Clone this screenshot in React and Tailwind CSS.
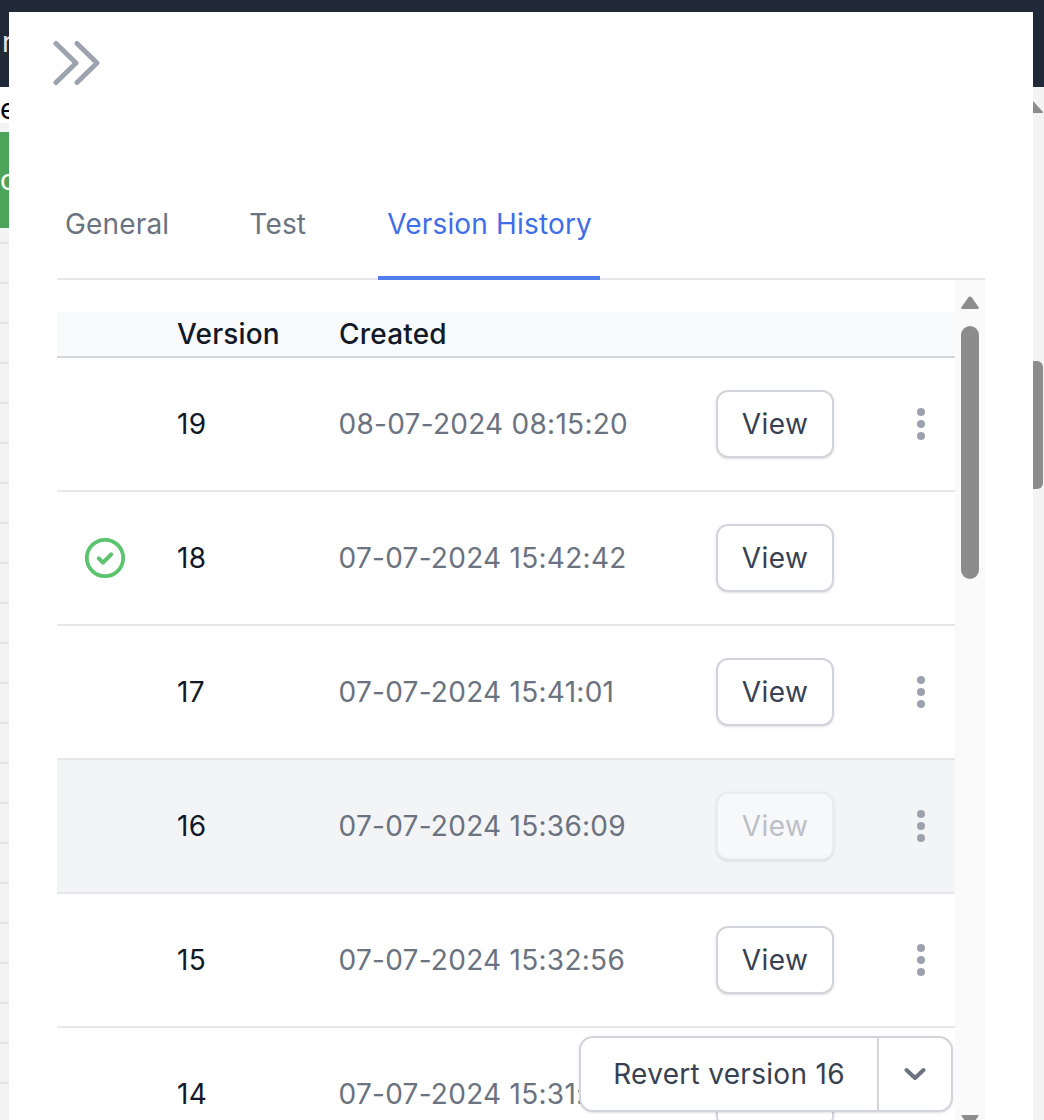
const rows = [
  { v: '19', d: '08-07-2024 08:15:20', menu: true },
  { v: '18', d: '07-07-2024 15:42:42', active: true },
  { v: '17', d: '07-07-2024 15:41:01', menu: true },
  { v: '16', d: '07-07-2024 15:36:09', menu: true, selected: true },
  { v: '15', d: '07-07-2024 15:32:56', menu: true },
  { v: '14', d: '07-07-2024 15:31:18', menu: true },
];

function Dots() {
  return (
    <svg width="10" height="34" viewBox="0 0 10 34" fill="#9ca3af" aria-hidden="true">
      <circle cx="5" cy="5" r="4" />
      <circle cx="5" cy="17" r="4" />
      <circle cx="5" cy="29" r="4" />
    </svg>
  );
}

function Check() {
  return (
    <svg width="42" height="42" viewBox="0 0 42 42" fill="none" stroke="#5cc36f" aria-hidden="true">
      <circle cx="21" cy="21" r="18.200" strokeWidth="3.800" />
      <path d="M14.800 21.400l4.200 4.200 8.200-8.200" strokeWidth="4" strokeLinecap="round" strokeLinejoin="round" />
    </svg>
  );
}

function Row({ r }) {
  return (
    <div className={`flex h-[134px] shrink-0 items-center border-b-2 border-[#e5e7eb] ${r.selected ? 'bg-[#f3f4f6]' : 'bg-white'}`}>
      <div className="flex w-[120px] justify-center">
        <div className="mr-[24px] flex w-[42px] justify-center">{r.active && <Check />}</div>
      </div>
      <div className="w-[162px] tracking-[0.4px] text-[#111827]">{r.v}</div>
      <div className="ml-[-0.5px] w-[377.5px] tracking-[0.27px] text-[#6b7280]">{r.d}</div>
      <button
        className={`flex h-[68px] w-[118px] items-center justify-center rounded-[12px] border-2 tracking-[0.4px] shadow-sm ${
          r.selected
            ? 'border-[#ebecef] bg-[#f7f8fa] text-[#bdbfc6]'
            : 'border-[#d1d5db] bg-white text-[#374151]'
        }`}
      >
        View
      </button>
      <div className="ml-[82px] flex w-[10px] justify-center">{r.menu && <Dots />}</div>
    </div>
  );
}

export default function App() {
  return (
    <div className="relative h-[1120px] w-[1044px] overflow-hidden bg-white font-['Inter',sans-serif] text-[28px] leading-none">
      {/* page behind the drawer */}
      <div className="flex h-[87px] bg-[#1f2937] pl-[2px] pt-[28px] text-[#e5e7eb]">r</div>
      <div className="flex h-[1033px] justify-between">
        <div className="flex w-[9px] flex-col overflow-hidden bg-[#f3f3f3]">
          <div className="h-[36px] shrink-0 bg-white pt-[8px] text-black">e</div>
          <div className="h-[9px] shrink-0" />
          <div className="h-[96px] shrink-0 bg-[#4ca45a] pt-[34px] text-white">o</div>
          {Array.from({ length: 22 }).map((_, i) => (
            <div
              key={i}
              className={`shrink-0 border-b-2 border-[#e3e3e3] ${i === 0 ? 'h-[16px]' : 'h-[40px]'}`}
            />
          ))}
        </div>
        <div className="relative w-[11px] bg-[#f3f3f3]">
          <svg className="mt-[13px]" width="11" height="14" viewBox="0 0 11 14" fill="#8c8c8c" aria-hidden="true">
            <path d="M0 1l10 11q.5 1-1 1H0z" />
          </svg>
          <div className="mt-[247px] h-[128px] w-[10px] rounded-r-[6px] bg-[#8c8c8c]" />
        </div>
      </div>

      {/* drawer */}
      <div className="absolute left-[9px] top-[12px] h-[1108px] w-[1024px] bg-white">
        <div className="h-[181px] pl-[44px] pt-[28px]">
          <svg width="47" height="46" viewBox="0 0 47 46" fill="none" stroke="#9ca3af" strokeWidth="5" strokeLinecap="round" strokeLinejoin="round" aria-hidden="true">
            <path d="M3 3.500l20 19.500L3 42.500" />
            <path d="M24 3.500L44 23 24 42.500" />
          </svg>
        </div>
        <div className="ml-[48px] flex h-[87px] w-[928px] gap-[64px] border-b-2 border-[#e5e7eb] tracking-[0.17px]">
          <div className="px-[8px] pt-[17px] text-[#6b7280]">General</div>
          <div className="px-[8px] pt-[17px] text-[#6b7280]">Test</div>
          <div className="mb-[-2px] h-[87px] border-b-4 border-[#4f80ee] pl-[9px] pr-[8px] pt-[17px] text-[#3f6ee8]">Version History</div>
        </div>
        <div className="relative ml-[48px] flex h-[840px] w-[928px] overflow-hidden">
          <div className="flex w-[898px] shrink-0 flex-col pt-[32px]">
            <div className="flex h-[46px] shrink-0 items-center border-b-2 border-[#d1d5db] bg-[#f9fafb] font-medium tracking-[0.2px] text-[#111827]">
              <div className="w-[120px]" />
              <div className="w-[162px]">Version</div>
              <div>Created</div>
            </div>
            {rows.map((r) => (
              <Row key={r.v} r={r} />
            ))}
          </div>
          <div className="flex w-[30px] flex-col items-center bg-[#fafafa] pt-[16px]">
            <svg className="shrink-0" width="18" height="14" viewBox="0 0 18 14" fill="#8c8c8c" aria-hidden="true">
              <path d="M7.500 1.200q1.500-1.600 3 0l7 9.800q1 2-1 2H1.500q-2 0-1-2z" />
            </svg>
            <div className="mt-[16px] h-[253px] w-[18px] shrink-0 rounded-[9px] bg-[#8c8c8c]" />
            <svg className="mt-[536px] shrink-0" width="18" height="8" viewBox="0 0 18 8" fill="#8c8c8c" aria-hidden="true">
              <path d="M1 0h16q1 0 .5 1L14 6H4L.5 1Q0 0 1 0z" />
            </svg>
          </div>
          <div className="absolute left-[522px] top-[756px] flex h-[76px] w-[374px] items-center rounded-[14px] border-2 border-[#d1d5db] bg-white tracking-[0.3px] text-[#374151] shadow-sm">
            <div className="flex h-full w-[298px] items-center justify-center border-r-2 border-[#d1d5db]">Revert version 16</div>
            <div className="flex flex-1 justify-center">
              <svg width="22" height="14" viewBox="0 0 22 14" fill="none" stroke="#6b7280" strokeWidth="4" strokeLinecap="round" strokeLinejoin="round" aria-hidden="true">
                <path d="M2.500 3l8.500 8 8.500-8" />
              </svg>
            </div>
          </div>
        </div>
      </div>
    </div>
  );
}
